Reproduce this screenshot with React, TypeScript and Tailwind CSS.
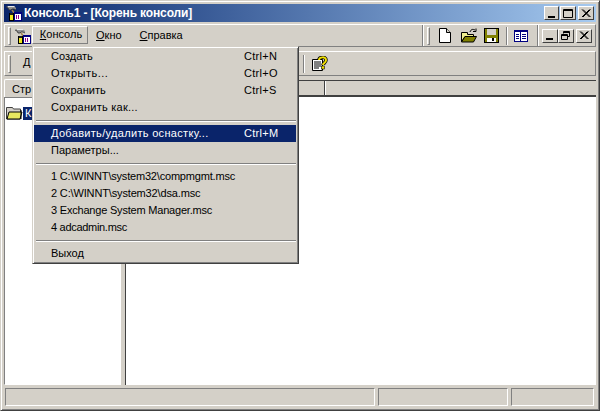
import React from 'react';

const raised = 'border border-t-white border-l-white border-r-[#808080] border-b-[#808080]';
const sunken = 'border border-t-[#808080] border-l-[#808080] border-r-white border-b-white';

const Grip: React.FC<{ className?: string }> = ({ className = '' }) => (
  <div className={`w-[3px] h-[18px] shrink-0 ${raised} ${className}`} />
);

const Divider: React.FC<{ className?: string }> = ({ className = '' }) => (
  <div className={`w-[2px] h-[18px] shrink-0 border-l border-l-[#808080] border-r border-r-white ${className}`} />
);

const ConsoleIcon = () => (
  <svg width="16" height="16" viewBox="0 0 16 16" className="shrink-0">
    <path d="M0 2l2-1h6l2 2v2L8 4H6L5 5H3L2 3z" fill="#909090" />
    <path d="M2 1h6l1 1H2z" fill="#e8e8e8" />
    <path d="M0 2l2 1 1 2h2l1-1h2l2 1" fill="none" stroke="#303030" strokeWidth=".8" />
    <path d="M6 5l3 4" stroke="#a08050" strokeWidth="1.500" />
    <rect x="3.500" y="8.500" width="4" height="7" fill="#f0e820" stroke="#000" />
    <rect x="4" y="8" width="3" height="2" fill="#202020" />
    <rect x="8" y="7" width="8" height="9" fill="#fff" />
    <rect x="8" y="7" width="8" height="2" fill="#000080" />
    <path d="M8.500 9v7M15.500 9v7M8 15.500h8" stroke="#000080" />
    <path d="M10.500 10v4M12.500 10v4" stroke="#900090" strokeWidth="1" />
  </svg>
);

const WinButton: React.FC<{ kind: 'min' | 'max' | 'restore' | 'close'; w?: string }> = ({ kind, w = 'w-[16px]' }) => (
  <div className={`${w} h-[14px] bg-[#d4d0c8] border border-t-white border-l-white border-r-[#404040] border-b-[#404040] flex items-center justify-center shrink-0`}>
    <svg width="12" height="11" viewBox="0 0 12 11">
      {kind === 'min' && <rect x="2" y="8" width="7" height="2" fill="#000" />}
      {kind === 'max' && <path d="M1.500 1.500h9v8h-9zM1.500 2.500h9" fill="none" stroke="#000" />}
      {kind === 'restore' && (
        <path d="M3.500 3.500V1.500h6v5h-2M3.500 2.500h6M1.500 4.500h6v5h-6zM1.500 5.500h6" fill="none" stroke="#000" />
      )}
      {kind === 'close' && <path d="M2 1.500l7.500 7.500M3 1.500l7.500 7.500M9.500 1.500L2 9M10.500 1.500L3 9" fill="none" stroke="#000" />}
    </svg>
  </div>
);

const NewIcon = () => (
  <svg width="12" height="15" viewBox="0 0 12 15" className="shrink-0">
    <path d="M.5.5h7l4 4v10H.5z" fill="#fff" stroke="#000" />
    <path d="M7.500.5v4h4" fill="#d4d0c8" stroke="#000" />
  </svg>
);

const OpenIcon = () => (
  <svg width="16" height="15" viewBox="0 0 16 15" className="shrink-0">
    <path d="M.5 4.500h6v2h6v2H4L.5 14z" fill="#f0f090" stroke="#000" />
    <path d="M4 8.500h11.500l-3 5.500H.5z" fill="#808000" stroke="#000" />
    <path d="M9 4c1-3 3-3 5-2" fill="none" stroke="#000" />
    <path d="M15 .5v3h-3" fill="none" stroke="#000" />
  </svg>
);

const SaveIcon = () => (
  <svg width="15" height="15" viewBox="0 0 15 15" className="shrink-0">
    <rect x=".5" y=".5" width="14" height="14" fill="#808000" stroke="#000" />
    <rect x="3" y="1" width="9" height="6" fill="#d4d0c8" />
    <rect x="3" y="10" width="9" height="4" fill="#fff" />
    <rect x="8" y="10" width="2" height="3" fill="#000" />
  </svg>
);

const PanesIcon = () => (
  <svg width="14" height="12" viewBox="0 0 14 12" className="shrink-0">
    <rect width="14" height="12" fill="#000080" />
    <rect x="1" y="2" width="5" height="9" fill="#fff" />
    <rect x="7" y="2" width="6" height="9" fill="#fff" />
    <path d="M2 4.500h3M2 6.500h3M2 8.500h3M8 4.500h4M8 6.500h4M8 8.500h4" stroke="#000080" />
  </svg>
);

const HelpIcon = () => (
  <svg width="16" height="16" viewBox="0 0 16 16" className="shrink-0">
    <path d="M.5 3.500h10v11h-10z" fill="#fff" stroke="#000" />
    <path d="M2 6h7M2 8h7M2 10h7M2 12h5" stroke="#000" />
    <path d="M7 4c0-3 7-4 7 0 0 3-3 3-3 5" fill="none" stroke="#000" strokeWidth="3.500" />
    <path d="M7 4c0-3 7-4 7 0 0 3-3 3-3 5" fill="none" stroke="#f0e000" strokeWidth="2" />
    <rect x="9.500" y="10" width="3" height="3" fill="#f0e000" stroke="#000" strokeWidth=".6" />
  </svg>
);

const FolderIcon = () => (
  <svg width="17" height="14" viewBox="0 0 17 14" className="shrink-0">
    <path d="M.5 3V1.500h6l1 1.500h7v10H.5z" fill="#d4d0c8" stroke="#404040" />
    <path d="M1 13l2-7h13l-2 7z" fill="#e8e860" stroke="#000" />
    <path d="M15 4v9" stroke="#000" />
  </svg>
);

const Item: React.FC<{ label: string; shortcut?: string; active?: boolean; tracking?: string }> = ({
  label,
  shortcut,
  active,
  tracking = '',
}) => (
  <div className={`h-[17px] flex items-center pl-[17px] shrink-0 ${active ? 'bg-[#0a246a] text-white' : ''}`}>
    <span className={`w-[193px] shrink-0 whitespace-nowrap ${tracking}`}>{label}</span>
    {shortcut && <span className="tracking-[0.3px]">{shortcut}</span>}
  </div>
);

const MenuSep = () => (
  <div className="h-[9px] flex items-center shrink-0 pl-[2px]">
    <div className="w-full h-[2px] border-t border-t-[#808080] border-b border-b-white" />
  </div>
);

const App: React.FC = () => (
  <div className="relative w-[600px] h-[411px] overflow-hidden bg-[#d4d0c8] text-[11px] leading-[13px] text-black font-['Liberation_Sans',Arial,sans-serif] border border-t-[#d4d0c8] border-l-[#d4d0c8] border-r-[#404040] border-b-[#404040] shadow-[inset_1px_1px_0_#fff,inset_-1px_-1px_0_#808080] p-[3px] flex flex-col">
    {/* title bar */}
    <div className="h-[18px] shrink-0 flex items-center pl-[2px] pr-[2px] bg-gradient-to-r from-[#0a246a] to-[#a6caf0]">
      <ConsoleIcon />
      <span className="ml-[2px] text-white font-bold text-[12px] tracking-[-0.13px] whitespace-nowrap">Консоль1 - [Корень консоли]</span>
      <div className="ml-auto flex items-center">
        <WinButton kind="min" w="w-[15px]" />
        <div className="w-[1px]" />
        <WinButton kind="max" />
        <div className="w-[2px]" />
        <WinButton kind="close" />
      </div>
    </div>

    {/* menu bar */}
    <div className="mt-[2px] h-[23px] shrink-0 flex border border-t-white border-l-white border-r-[#808080] border-b-[#808080]">
      <div className="flex-1 flex items-center pl-[3px] border-r border-r-[#808080]">
        <Grip />
        <div className="w-[4px]" />
        <ConsoleIcon />
        <div className="ml-[1px] mb-[2px] w-[56px] h-[18px] flex items-center justify-center pl-[2px] border border-t-white border-l-white border-r-[#808080] border-b-[#808080]">
          <span><u>К</u>онсоль</span>
        </div>
        <span className="ml-[8px]"><u>О</u>кно</span>
        <span className="ml-[18px]"><u>С</u>правка</span>
      </div>
      <div className="w-[115px] flex items-center border-l border-l-white border-r border-r-[#808080] pl-[3px]">
        <Grip />
        <div className="ml-[9px]"><NewIcon /></div>
        <div className="ml-[10px]"><OpenIcon /></div>
        <div className="ml-[7px]"><SaveIcon /></div>
        <Divider className="ml-[7px]" />
        <div className="ml-[6px]"><PanesIcon /></div>
      </div>
      <div className="w-[57px] flex items-center pl-[3px] border-l border-l-white">
        <WinButton kind="min" />
        <WinButton kind="restore" />
        <div className="w-[2px]" />
        <WinButton kind="close" />
      </div>
    </div>

    {/* action toolbar, label runs under the open menu */}
    <div className="mt-[4px] h-[25px] shrink-0 flex items-center pl-[3px] border border-t-white border-l-white border-r-[#808080] border-b-[#808080]">
      <Grip />
      <span className="ml-[12px] mb-[2px] w-[9px]"><u>Д</u></span>
      <Divider className="ml-[271px]" />
      <div className="ml-[7px]"><HelpIcon /></div>
    </div>

    {/* panes */}
    <div className="mt-[3px] flex-1 min-h-0 flex">
      <div className="w-[117px] shrink-0 flex flex-col">
        <div className="h-[18px] shrink-0 flex">
          <div className="w-full rounded-t-[2px] border-t border-l border-t-white border-l-white border-r border-r-[#404040] pl-[7px] pt-[3px]">Стр</div>
        </div>
        <div className={`flex-1 bg-white ${sunken} pt-[8px] pl-[1px]`}>
          <div className="flex items-center whitespace-nowrap">
            <FolderIcon />
            <span className="w-[12px] bg-[#0a246a] text-white px-[2px]">К</span>
          </div>
        </div>
      </div>
      <div className="w-[4px] shrink-0" />
      <div className="flex-1 mt-[1px] flex flex-col border-t border-l border-t-[#404040] border-l-[#404040]">
        <div className="h-[16px] shrink-0 flex border-b-2 border-b-[#404040]">
          <div className="w-[173px] shrink-0" />
          <div className="w-[26px] shrink-0 border-r border-r-[#404040]" />
          <div className="flex-1 border-l border-l-white" />
        </div>
        <div className="flex-1 bg-white border-r border-b border-r-white border-b-white" />
      </div>
    </div>

    {/* status bar */}
    <div className="mt-[3px] h-[18px] shrink-0 flex gap-[3px] mb-[1px] pl-[1px] pr-[2px]">
      <div className={`w-[370px] ${sunken}`} />
      <div className={`w-[130px] ${sunken}`} />
      <div className={`flex-1 ${sunken}`} />
    </div>

    {/* open menu */}
    <div className="absolute left-[31px] top-[45px] w-[267px] h-[218px] bg-[#d4d0c8] border border-t-[#d4d0c8] border-l-[#d4d0c8] border-r-[#404040] border-b-[#404040] flex flex-col pl-[1px] pr-[2px] pt-[1px] shadow-[inset_1px_1px_0_#fff,inset_-1px_-1px_0_#808080]">
      <Item label="Создать" shortcut="Ctrl+N" />
      <Item label="Открыть..." shortcut="Ctrl+O" tracking="tracking-[0.5px]" />
      <Item label="Сохранить" shortcut="Ctrl+S" />
      <Item label="Сохранить как..." tracking="tracking-[0.25px]" />
      <MenuSep />
      <Item label="Добавить/удалить оснастку..." shortcut="Ctrl+M" active tracking="tracking-[0.32px]" />
      <Item label="Параметры..." />
      <MenuSep />
      <Item label="1 C:\WINNT\system32\compmgmt.msc" tracking="tracking-[-0.19px]" />
      <Item label="2 C:\WINNT\system32\dsa.msc" tracking="tracking-[-0.15px]" />
      <Item label="3 Exchange System Manager.msc" tracking="tracking-[-0.2px]" />
      <Item label="4 adcadmin.msc" tracking="tracking-[-0.3px]" />
      <MenuSep />
      <Item label="Выход" />
    </div>
  </div>
);

export default App;
